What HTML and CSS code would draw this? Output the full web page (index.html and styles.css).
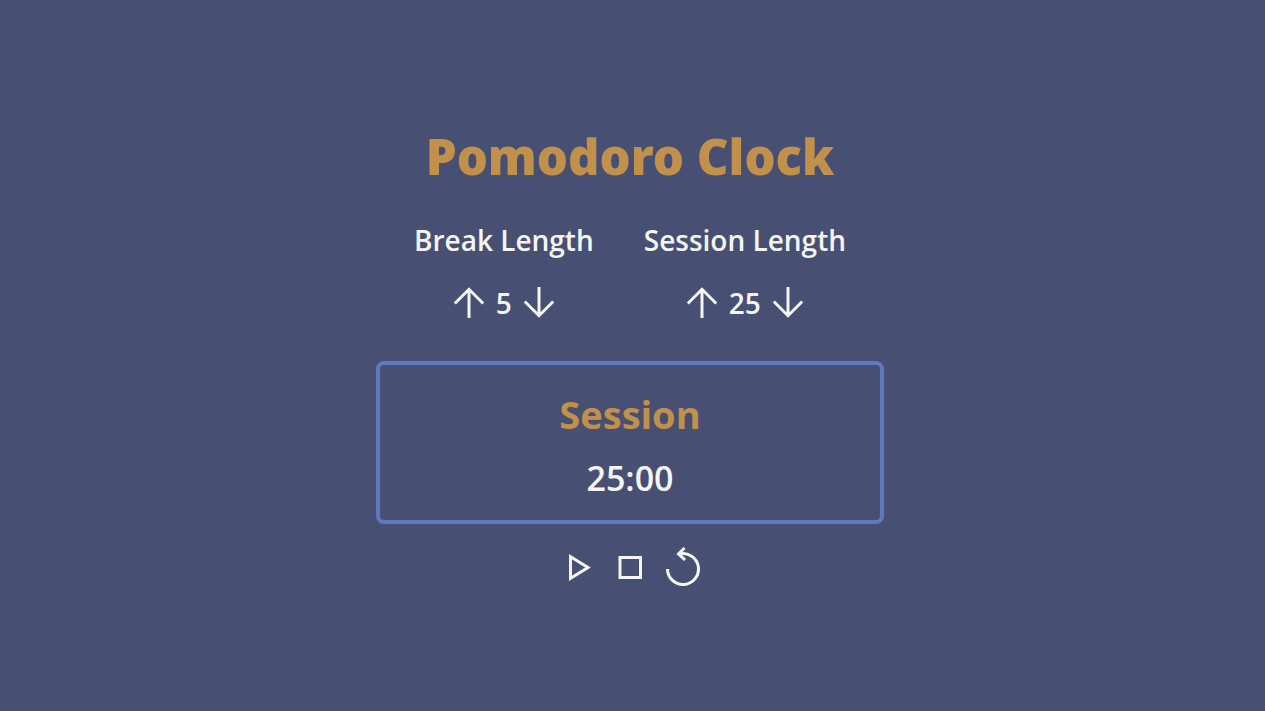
FILE: index.html
```html
<!DOCTYPE html>
<html lang="en">
<head>
  <meta charset="utf-8">
  <meta name="viewport" content="width=device-width, initial-scale=1">
  <title>Pomodoro Clock</title>
  <link rel="stylesheet" href="styles.css">
</head>
<body>
  <main class="clock">
    <h1 class="title">Pomodoro Clock</h1>
    <div class="settings">
      <section class="setting">
        <h2 class="label">Break Length</h2>
        <div class="stepper">
          <button class="icon-button" type="button" aria-label="Increase break length">
            <svg class="arrow" viewBox="0 0 32 32"><path d="M16 31V2.500M1.800 16.500 16 2.300l14.200 14.200"/></svg>
          </button>
          <span class="length">5</span>
          <button class="icon-button" type="button" aria-label="Decrease break length">
            <svg class="arrow" viewBox="0 0 32 32"><path d="M16 0v28.500M1.800 14.500 16 28.700l14.200-14.200"/></svg>
          </button>
        </div>
      </section>
      <section class="setting">
        <h2 class="label">Session Length</h2>
        <div class="stepper">
          <button class="icon-button" type="button" aria-label="Increase session length">
            <svg class="arrow" viewBox="0 0 32 32"><path d="M16 31V2.500M1.800 16.500 16 2.300l14.200 14.200"/></svg>
          </button>
          <span class="length">25</span>
          <button class="icon-button" type="button" aria-label="Decrease session length">
            <svg class="arrow" viewBox="0 0 32 32"><path d="M16 0v28.500M1.800 14.500 16 28.700l14.200-14.200"/></svg>
          </button>
        </div>
      </section>
    </div>
    <section class="timer">
      <h2 class="phase">Session</h2>
      <div class="time">25:00</div>
    </section>
    <div class="controls">
      <button class="icon-button" type="button" aria-label="Start">
        <svg class="control" viewBox="0 0 40 40"><path d="M12.500 9.800v21.400L30 20.500z"/></svg>
      </button>
      <button class="icon-button" type="button" aria-label="Stop">
        <svg class="control" viewBox="0 0 40 40"><path d="M10 10.500h20.500v20H10z"/></svg>
      </button>
      <button class="icon-button" type="button" aria-label="Reset">
        <svg class="control" viewBox="0 0 40 40"><path d="M5.500 22A15.500 15.500 0 1 0 17 7M22.500 1 16.500 7l6.500 5.800"/></svg>
      </button>
    </div>
  </main>
</body>
</html>
```
FILE: styles.css
```css
* {
  box-sizing: border-box;
}

body {
  margin: 0;
  min-height: 100vh;
  padding-right: 5px;
  display: flex;
  align-items: center;
  justify-content: center;
  background: #475072;
  color: #f5f5f5;
  font-family: "Segoe UI", "Open Sans", "Noto Sans", sans-serif;
  font-weight: 600;
}

h1,
h2 {
  margin: 0;
}

.clock {
  width: 100%;
  max-width: 508px;
  display: flex;
  flex-direction: column;
  align-items: center;
}

.title {
  color: #c1914c;
  font-family: "Noto Sans", sans-serif;
  font-size: 49px;
  font-weight: 900;
  line-height: 64px;
  white-space: nowrap;
}

.settings {
  display: flex;
  flex-wrap: wrap;
  justify-content: center;
  gap: 50px;
  margin-top: 32px;
}

.setting {
  display: flex;
  flex-direction: column;
  align-items: center;
  gap: 23px;
}

.label,
.length {
  font-size: 28px;
  font-weight: 600;
  line-height: 40px;
}

.stepper {
  display: flex;
  align-items: center;
  gap: 11px;
}

.icon-button {
  display: flex;
  padding: 0;
  border: 0;
  background: none;
  color: inherit;
  cursor: pointer;
}

.icon-button svg {
  fill: none;
  stroke: currentColor;
  stroke-width: 3;
}

.arrow {
  width: 32px;
  height: 32px;
}

.control {
  width: 40px;
  height: 40px;
}

.timer {
  align-self: stretch;
  margin-top: 38px;
  padding: 21px 22px 18px;
  border: 4px solid #6077c2;
  border-radius: 8px;
  text-align: center;
}

.phase {
  color: #c1914c;
  font-size: 38px;
  font-weight: 700;
  line-height: 56px;
}

.time {
  margin-top: 12px;
  font-size: 34px;
  line-height: 48px;
}

.controls {
  display: flex;
  gap: 12px;
  margin-top: 23px;
}
```
